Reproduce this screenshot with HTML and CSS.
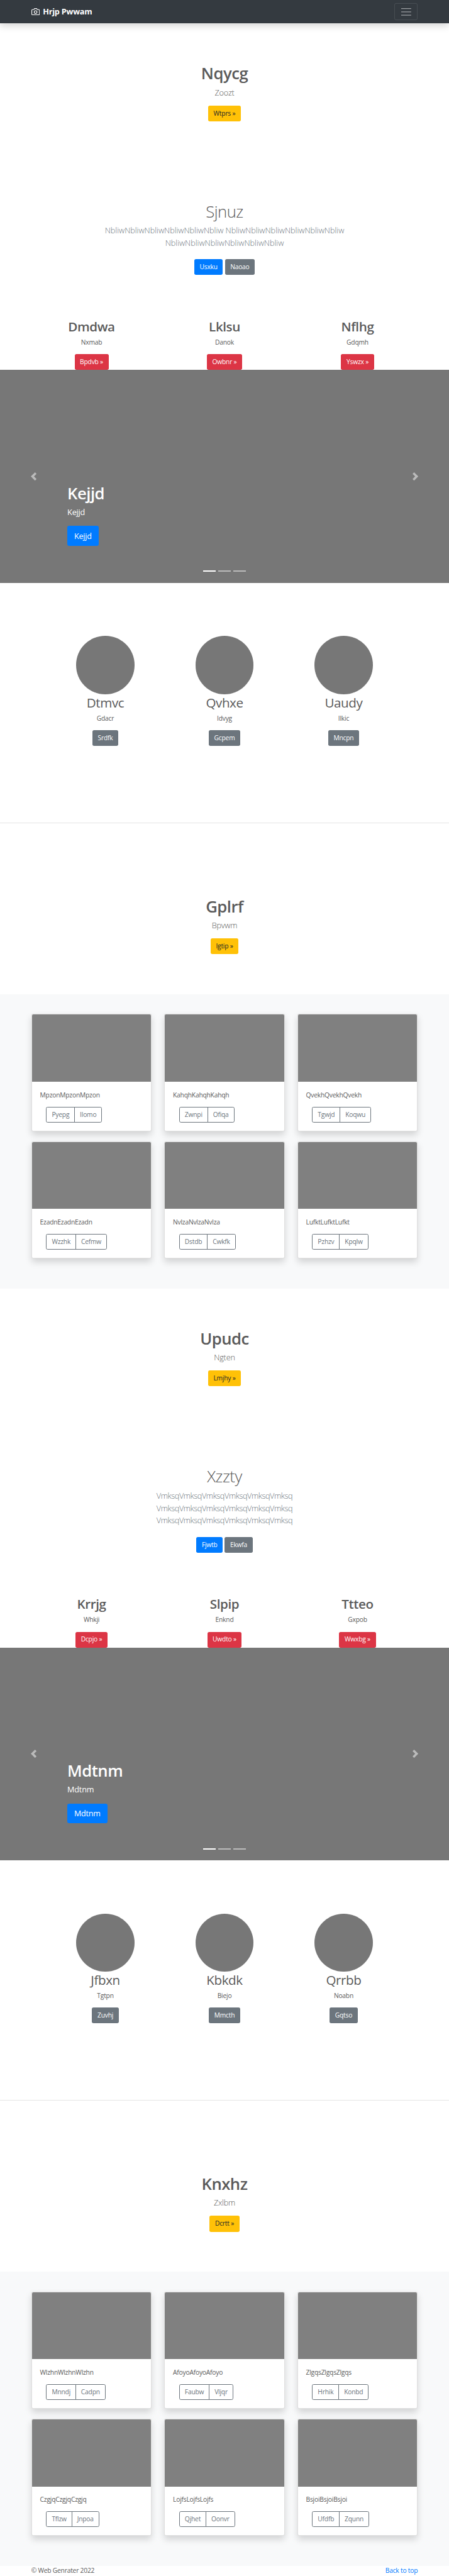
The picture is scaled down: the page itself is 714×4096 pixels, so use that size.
FILE: index.html
```html
<!DOCTYPE html>
<html lang="en">
<head>
<meta charset="utf-8">
<title>Hrjp Pwwam</title>
<link rel="stylesheet" href="styles.css">
</head>
<body>
<header class="navbar">
  <div class="container navbar-inner">
    <a class="brand"><svg class="brand-icon" viewBox="0 0 24 24" fill="none" stroke="currentColor" stroke-width="2" stroke-linecap="round" stroke-linejoin="round"><path d="M23 19a2 2 0 0 1-2 2H3a2 2 0 0 1-2-2V8a2 2 0 0 1 2-2h4l2-3h6l2 3h4a2 2 0 0 1 2 2z"/><circle cx="12" cy="13" r="4"/></svg><strong>Hrjp Pwwam</strong></a>
    <button class="toggler"><svg viewBox="0 0 30 30" stroke="currentColor" stroke-width="2" stroke-miterlimit="10"><path d="M3 7h24M3 15h24M3 23h24"/></svg></button>
  </div>
</header>
<main>
  <section class="jumbotron">
    <h1 class="title">Nqycg</h1>
    <p class="lead">Zoozt</p>
    <a class="btn btn-warning">Wtprs »</a>
  </section>
  <section class="intro">
    <h1 class="title title-light">Sjnuz</h1>
    <p class="lead lead-wide">NbliwNbliwNbliwNbliwNbliwNbliw NbliwNbliwNbliwNbliwNbliwNbliw<br>NbliwNbliwNbliwNbliwNbliwNbliw</p>
    <p class="actions"><a class="btn btn-primary">Usxku</a><a class="btn btn-secondary">Naoao</a></p>
  </section>
  <section class="columns">
    <div class="column"><h2>Dmdwa</h2><p>Nxmab</p><a class="btn btn-danger">Bpdvb »</a></div>
    <div class="column"><h2>Lklsu</h2><p>Danok</p><a class="btn btn-danger">Owbnr »</a></div>
    <div class="column"><h2>Nflhg</h2><p>Gdqmh</p><a class="btn btn-danger">Yswzx »</a></div>
  </section>
  <section class="carousel">
    <a class="control"><svg viewBox="0 0 8 8" fill="currentColor"><path d="M5.25 0l-4 4 4 4 1.5-1.5L4.25 4l2.5-2.5L5.25 0z"/></svg></a>
    <div class="slide">
      <h1>Kejjd</h1><p>Kejjd</p><a class="btn btn-primary btn-lg">Kejjd</a>
      <div class="indicators"><i class="active"></i><i></i><i></i></div>
    </div>
    <a class="control"><svg viewBox="0 0 8 8" fill="currentColor"><path d="M2.75 0l-1.5 1.5L3.75 4l-2.5 2.5L2.75 8l4-4-4-4z"/></svg></a>
  </section>
  <section class="people">
    <div class="person"><span class="avatar"></span><h2>Dtmvc</h2><p>Gdacr</p><a class="btn btn-secondary">Srdfk</a></div>
    <div class="person"><span class="avatar"></span><h2>Qvhxe</h2><p>Idvyg</p><a class="btn btn-secondary">Gcpem</a></div>
    <div class="person"><span class="avatar"></span><h2>Uaudy</h2><p>Ilkic</p><a class="btn btn-secondary">Mncpn</a></div>
  </section>
  <hr class="divider">
  <section class="jumbotron">
    <h1 class="title">Gplrf</h1>
    <p class="lead">Bpvwm</p>
    <a class="btn btn-warning">Igtip »</a>
  </section>
  <section class="album">
    <article class="card"><div class="thumb"></div><div class="card-body"><p>MpzonMpzonMpzon</p><div class="group"><a class="btn">Pyepg</a><a class="btn">Ilomo</a></div></div></article>
    <article class="card"><div class="thumb"></div><div class="card-body"><p>KahqhKahqhKahqh</p><div class="group"><a class="btn">Zwnpi</a><a class="btn">Ofiqa</a></div></div></article>
    <article class="card"><div class="thumb"></div><div class="card-body"><p>QvekhQvekhQvekh</p><div class="group"><a class="btn">Tgwjd</a><a class="btn">Koqwu</a></div></div></article>
    <article class="card"><div class="thumb"></div><div class="card-body"><p>EzadnEzadnEzadn</p><div class="group"><a class="btn">Wzzhk</a><a class="btn">Cefmw</a></div></div></article>
    <article class="card"><div class="thumb"></div><div class="card-body"><p>NvlzaNvlzaNvlza</p><div class="group"><a class="btn">Dstdb</a><a class="btn">Cwkfk</a></div></div></article>
    <article class="card"><div class="thumb"></div><div class="card-body"><p>LufktLufktLufkt</p><div class="group"><a class="btn">Pzhzv</a><a class="btn">Kpqlw</a></div></div></article>
  </section>

  <section class="jumbotron">
    <h1 class="title">Upudc</h1>
    <p class="lead">Ngten</p>
    <a class="btn btn-warning">Lmjhy »</a>
  </section>
  <section class="intro">
    <h1 class="title title-light">Xzzty</h1>
    <p class="lead lead-tight">VmksqVmksqVmksqVmksqVmksqVmksq<br>VmksqVmksqVmksqVmksqVmksqVmksq<br>VmksqVmksqVmksqVmksqVmksqVmksq</p>
    <p class="actions"><a class="btn btn-primary">Fjwtb</a><a class="btn btn-secondary">Ekwfa</a></p>
  </section>
  <section class="columns">
    <div class="column"><h2>Krrjg</h2><p>Whkji</p><a class="btn btn-danger">Dcpjo »</a></div>
    <div class="column"><h2>Slpip</h2><p>Enknd</p><a class="btn btn-danger">Uwdto »</a></div>
    <div class="column"><h2>Ttteo</h2><p>Gxpob</p><a class="btn btn-danger">Wwxbg »</a></div>
  </section>
  <section class="carousel">
    <a class="control"><svg viewBox="0 0 8 8" fill="currentColor"><path d="M5.25 0l-4 4 4 4 1.5-1.5L4.25 4l2.5-2.5L5.25 0z"/></svg></a>
    <div class="slide">
      <h1>Mdtnm</h1><p>Mdtnm</p><a class="btn btn-primary btn-lg">Mdtnm</a>
      <div class="indicators"><i class="active"></i><i></i><i></i></div>
    </div>
    <a class="control"><svg viewBox="0 0 8 8" fill="currentColor"><path d="M2.75 0l-1.5 1.5L3.75 4l-2.5 2.5L2.75 8l4-4-4-4z"/></svg></a>
  </section>
  <section class="people">
    <div class="person"><span class="avatar"></span><h2>Jfbxn</h2><p>Tgtpn</p><a class="btn btn-secondary">Zuvhj</a></div>
    <div class="person"><span class="avatar"></span><h2>Kbkdk</h2><p>Biejo</p><a class="btn btn-secondary">Mmcth</a></div>
    <div class="person"><span class="avatar"></span><h2>Qrrbb</h2><p>Noabn</p><a class="btn btn-secondary">Gqtso</a></div>
  </section>
  <hr class="divider">
  <section class="jumbotron">
    <h1 class="title">Knxhz</h1>
    <p class="lead">Zxlbm</p>
    <a class="btn btn-warning">Dcrtt »</a>
  </section>
  <section class="album">
    <article class="card"><div class="thumb"></div><div class="card-body"><p>WlzhnWlzhnWlzhn</p><div class="group"><a class="btn">Mnndj</a><a class="btn">Cadpn</a></div></div></article>
    <article class="card"><div class="thumb"></div><div class="card-body"><p>AfoyoAfoyoAfoyo</p><div class="group"><a class="btn">Faubw</a><a class="btn">Vljqr</a></div></div></article>
    <article class="card"><div class="thumb"></div><div class="card-body"><p>ZlgqsZlgqsZlgqs</p><div class="group"><a class="btn">Hrhik</a><a class="btn">Konbd</a></div></div></article>
    <article class="card"><div class="thumb"></div><div class="card-body"><p>CzgjqCzgjqCzgjq</p><div class="group"><a class="btn">Tflzw</a><a class="btn">Jnpoa</a></div></div></article>
    <article class="card"><div class="thumb"></div><div class="card-body"><p>LojfsLojfsLojfs</p><div class="group"><a class="btn">Qjhet</a><a class="btn">Oonvr</a></div></div></article>
    <article class="card"><div class="thumb"></div><div class="card-body"><p>BsjoiBsjoiBsjoi</p><div class="group"><a class="btn">Ufdfb</a><a class="btn">Zqunn</a></div></div></article>
  </section>
</main>
<footer class="container footer"><span>© Web Genrater 2022</span><a>Back to top</a></footer>
</body>
</html>
```
FILE: styles.css
```css
/* 1rem is the base unit; every length below scales with it */
html { font-size: 10.574px; }
*, *::before, *::after { box-sizing: border-box; }
body {
  margin: 0;
  background: #fff;
  color: #5a5a5a;
  font-family: "Open Sans", "Noto Sans", sans-serif;
  font-size: .97rem;
  line-height: 1.5rem;
  letter-spacing: -.02em;
  overflow-x: hidden;
}
h1, h2, p { margin: 0; }
h1 { font-size: 2.43rem; line-height: 3.14rem; font-weight: 600; letter-spacing: -.02em; margin-bottom: .36rem; }
h2 { font-size: 1.95rem; line-height: 2.5rem; font-weight: 400; letter-spacing: -.02em; margin-bottom: .4rem; }
.container { width: 60rem; margin: 0 auto; padding: 0 .9375rem; }

.navbar {
  height: 3.5rem;
  background: #343a40;
  box-shadow: 0 .5rem 1rem rgba(0, 0, 0, .15);
}
.navbar-inner { height: 100%; display: flex; align-items: center; justify-content: space-between; }
.brand { display: flex; align-items: center; color: #fff; font-size: 1.2rem; line-height: 1.875rem; }
.brand-icon { width: 1.25rem; height: 1.25rem; margin-right: .5rem; }
.brand strong { font-weight: 700; padding-top: .06rem; }
.toggler {
  width: 3.5rem; height: 2.5rem; padding: 0;
  display: flex; align-items: center; justify-content: center;
  color: rgba(255, 255, 255, .5);
  background: none; border: 1px solid rgba(255, 255, 255, .1); border-radius: .25rem;
}
.toggler svg { width: 1.875rem; height: 1.875rem; display: block; }

.btn {
  display: inline-block;
  height: 2.375rem;
  padding: .4625rem .8125rem 0;
  border-radius: .25rem;
  color: #fff;
  white-space: nowrap;
}
.btn-primary { background: #007bff; }
.btn-secondary { background: #6c757d; }
.btn-danger { background: #dc3545; }
.btn-warning { background: #ffc107; color: #212529; }
.btn-lg { height: 3rem; padding: .6rem 1.03rem 0; font-size: 1.19rem; line-height: 1.875rem; border-radius: .3rem; }

.jumbotron, .intro { display: flex; flex-direction: column; align-items: center; text-align: center; padding: 6rem 0; }
.title-light { font-weight: 300; }
.lead { font-size: 1.2rem; line-height: 1.875rem; font-weight: 300; padding-top: .04rem; margin-bottom: .96rem; }
.lead-wide { letter-spacing: -.002em; }
.lead-tight { letter-spacing: -.032em; }
.intro .lead { color: #6c757d; }
.actions { display: flex; gap: .3rem; margin: .5rem 0; }

.columns { width: 60rem; margin: 0 auto; display: flex; text-align: center; }
.column { flex: 1; display: flex; flex-direction: column; align-items: center; }
.column h2 { font-weight: 600; }
.column p, .person p { padding-top: .025rem; margin-bottom: .975rem; }
.columns h2, .people h2 { margin-bottom: .3rem; padding-bottom: 0; }
.columns p, .people p { margin-top: .1rem; }

.carousel { height: 32rem; background: #777; display: flex; color: #fff; margin-bottom: 8rem; }
.control { width: 15%; display: flex; align-items: center; justify-content: center; opacity: .5; }
.control svg { width: 1.25rem; height: 1.25rem; }
.slide { flex: 1; display: flex; flex-direction: column; align-items: flex-start; justify-content: flex-end; }
.slide p { font-size: 1.2rem; line-height: 1.75rem; padding-top: .04rem; margin-bottom: 1.21rem; }
.indicators { align-self: center; display: flex; gap: .375rem; margin: 3.72rem 0 1.63rem; }
.indicators i { width: 1.875rem; height: 2px; background: #fff; opacity: .5; }
.indicators .active { opacity: 1; }

.people { width: 53.75rem; height: 28.04rem; margin: 0 auto; display: flex; text-align: center; }
.person { flex: 1; display: flex; flex-direction: column; align-items: center; }
.avatar { width: 8.75rem; height: 8.75rem; border-radius: 50%; background: #777; }
.divider { margin: 0 0 calc(5.0625rem - 1px); border: 0; border-top: 1px solid rgba(0, 0, 0, .1); }

.album {
  background: #f8f9fa;
  padding: 3rem calc(50% - 29.0625rem) 4.5rem;
  display: grid; grid-template-columns: repeat(3, 1fr); gap: 1.5rem 1.875rem;
}
.card {
  height: 17.625rem;
  background: #fff;
  border: 1px solid rgba(0, 0, 0, .125);
  border-radius: .25rem;
  box-shadow: 0 .5rem 1rem rgba(0, 0, 0, .15);
}
.thumb { height: calc(10.1875rem - 1px); background: #808080; border-radius: .19rem .19rem 0 0; }
.card-body { padding: 1.25rem calc(1.3125rem - 1px); }
.card-body p { padding-top: .025rem; margin-bottom: .975rem; }
.group { display: flex; margin-left: .9375rem; }
.group .btn { border: 1px solid #6c757d; color: #6c757d; padding: calc(.4625rem - 1px) .75rem 0; }
.group .btn:first-child { border-radius: .25rem 0 0 .25rem; }
.group .btn:last-child { border-radius: 0 .25rem .25rem 0; margin-left: -1px; }

.footer { display: flex; justify-content: space-between; }
.footer a { color: #007bff; }
```
